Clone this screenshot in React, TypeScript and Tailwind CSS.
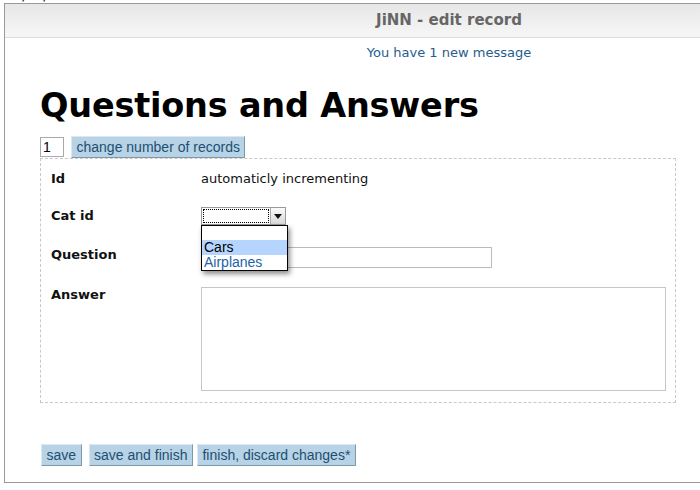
const btn = 'bg-[#b7d3e5] text-[#1d4f73] border-r border-b border-r-[#7f98a8] border-b-[#7f98a8] border-t border-l border-t-[#d9e8f1] border-l-[#d9e8f1] px-[4.5px] h-[22px] text-[14px] leading-[20px] font-["Liberation_Sans",Arial,sans-serif]';

const labelCls = 'font-bold text-[13px] text-[#111] font-["DejaVu_Sans",Verdana,sans-serif]';

export default function App() {
  return (
    <div className="w-[700px] h-[490px] overflow-hidden bg-white relative">
      <div className='-mt-[10px] -ml-[3px] h-[13px] text-[12px] leading-[13px] font-bold font-["DejaVu_Sans",sans-serif] text-[#222]'>/ 04/22/2009</div>
      <div className="ml-[4px] w-[890px] h-[480px] border border-[#9a9a9a] flex flex-col">
        <div className='h-[34px] shrink-0 bg-gradient-to-b from-[#e6e6e6] to-[#f7f7f7] border-b border-[#dcdcdc] text-center text-[15px] leading-[33px] font-bold text-[#666] font-["DejaVu_Sans",Verdana,sans-serif]'>
          JiNN - edit record
        </div>
        <div className='text-center text-[13px] leading-[16px] mt-[7px] text-[#1f5d8e] font-["DejaVu_Sans",Verdana,sans-serif]'>
          You have 1 new message
        </div>
        <div className="pl-[35px] pt-[24px]">
          <h1 className='text-[33.5px] leading-[42px] font-bold text-black font-["DejaVu_Sans",Verdana,sans-serif] tracking-[-0.2px]'>
            Questions and Answers
          </h1>
          <div className="flex items-center gap-[7px] mt-[10px] h-[20px]">
            <input
              defaultValue="1"
              className='w-[24px] h-[20px] border border-[#aaa] px-[2px] text-[14px] font-["Liberation_Sans",Arial,sans-serif] outline-none'
            />
            <button className={btn}>change number of records</button>
          </div>
          <div className="w-[636px] h-[245px] mt-[1px] border border-dashed border-[#c8c8c8] pl-[10px] pt-[10px]">
            <div className="grid grid-cols-[150px_1fr] items-center">
              <div className={labelCls + ' h-[20px] leading-[20px]'}>Id</div>
              <div className='text-[13px] h-[20px] leading-[20px] text-[#111] font-["DejaVu_Sans",Verdana,sans-serif]'>automaticly incrementing</div>

              <div className={labelCls + ' mt-[17px] h-[20px] leading-[20px]'}>Cat id</div>
              <div className="mt-[17px] h-[20px] relative">
                <div className="flex w-[85px] h-[18px] mt-[1px] border border-[#999] bg-white">
                  <div className="flex-1 m-[1px] border border-dotted border-black" />
                  <div className="w-[15px] flex items-center justify-center bg-gradient-to-b from-[#fafafa] to-[#d8d8d8] border-l border-[#aaa]">
                    <svg width="8" height="5" viewBox="0 0 8 5"><path d="M0 0h8L4 5z" fill="#111" /></svg>
                  </div>
                </div>
                <div className='absolute left-0 top-[19px] w-[87px] border border-black bg-white shadow-[2px_3px_5px_rgba(0,0,0,0.45)] z-10 text-[14px] leading-[15px] font-["Liberation_Sans",Arial,sans-serif]'>
                  <div className="h-[14px]" />
                  <div className="bg-[#b5d5ff] text-black px-[2px]">Cars</div>
                  <div className="text-[#1d62a7] px-[2px]">Airplanes</div>
                </div>
              </div>

              <div className={labelCls + ' mt-[19px] h-[20px] leading-[20px]'}>Question</div>
              <div className="mt-[19px] h-[20px]">
                <input className="w-[291px] h-[21px] border border-[#bbb] outline-none" />
              </div>

              <div className={labelCls + ' self-start mt-[20px] h-[20px] leading-[20px]'}>Answer</div>
              <div className="mt-[22px]">
                <textarea className="block w-[465px] h-[104px] border border-[#c6c6c6] resize-none outline-none" />
              </div>
            </div>
          </div>
          <div className="flex items-center gap-[7px] mt-[41px] ml-[1px]">
            <button className={btn}>save</button>
            <button className={btn}>save and finish</button>
            <button className={btn + ' -ml-[3px]'}>finish, discard changes*</button>
          </div>
        </div>
      </div>
    </div>
  );
}
